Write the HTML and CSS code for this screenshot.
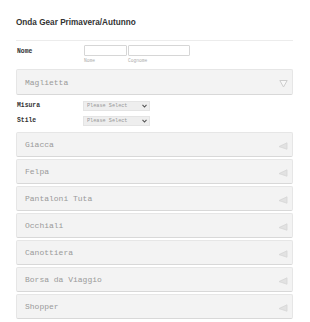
FILE: index.html
```html
<!DOCTYPE html>
<html lang="it">
  <head>
    <meta charset="UTF-8" />
    <meta name="viewport" content="width=device-width, initial-scale=1.0" />
    <title>Onda Gear</title>
    <link rel="stylesheet" href="styles.css">
  </head>
  <body>
    <main class="modulo">
      <h1 class="titolo">Onda Gear Primavera/Autunno</h1>

      <div class="riga riga-nome">
        <label class="etichetta">Nome</label>
        <div class="campo">
          <input type="text" class="inp inp-nome" />
          <span class="sotto">Nome</span>
        </div>
        <div class="campo">
          <input type="text" class="inp inp-cognome" />
          <span class="sotto">Cognome</span>
        </div>
      </div>

      <section class="pannello aperto">
        <span>Maglietta</span>
        <svg class="freccia" width="9" height="9" viewBox="0 0 9 9">
          <path d="M0.8 1.5 L8.2 1.5 L4.5 8 Z" fill="#f8f8f8" stroke="#cdcdcd" stroke-width="1" />
        </svg>
      </section>

      <div class="riga riga-sel prima">
        <label class="etichetta">Misura</label>
        <span class="scelta">
          <select class="sel"><option>Please Select</option></select>
          <svg class="chev" width="5" height="4" viewBox="0 0 5 4"><path d="M0.5 0.8 L2.5 3 L4.5 0.8" fill="none" stroke="#555" stroke-width="1.1" /></svg>
        </span>
      </div>
      <div class="riga riga-sel">
        <label class="etichetta">Stile</label>
        <span class="scelta">
          <select class="sel"><option>Please Select</option></select>
          <svg class="chev" width="5" height="4" viewBox="0 0 5 4"><path d="M0.5 0.8 L2.5 3 L4.5 0.8" fill="none" stroke="#555" stroke-width="1.1" /></svg>
        </span>
      </div>

      <div class="lista">
        <section class="pannello"><span>Giacca</span><svg class="freccia" width="10" height="8" viewBox="0 0 10 8"><path d="M9 0.8 L9 7.2 L1 4.6 Z" fill="#e2e2e2" stroke="#d6d6d6" stroke-width="0.8" /></svg></section>
        <section class="pannello"><span>Felpa</span><svg class="freccia" width="10" height="8" viewBox="0 0 10 8"><path d="M9 0.8 L9 7.2 L1 4.6 Z" fill="#e2e2e2" stroke="#d6d6d6" stroke-width="0.8" /></svg></section>
        <section class="pannello"><span>Pantaloni Tuta</span><svg class="freccia" width="10" height="8" viewBox="0 0 10 8"><path d="M9 0.8 L9 7.2 L1 4.6 Z" fill="#e2e2e2" stroke="#d6d6d6" stroke-width="0.8" /></svg></section>
        <section class="pannello"><span>Occhiali</span><svg class="freccia" width="10" height="8" viewBox="0 0 10 8"><path d="M9 0.8 L9 7.2 L1 4.6 Z" fill="#e2e2e2" stroke="#d6d6d6" stroke-width="0.8" /></svg></section>
        <section class="pannello"><span>Canottiera</span><svg class="freccia" width="10" height="8" viewBox="0 0 10 8"><path d="M9 0.8 L9 7.2 L1 4.6 Z" fill="#e2e2e2" stroke="#d6d6d6" stroke-width="0.8" /></svg></section>
        <section class="pannello"><span>Borsa da Viaggio</span><svg class="freccia" width="10" height="8" viewBox="0 0 10 8"><path d="M9 0.8 L9 7.2 L1 4.6 Z" fill="#e2e2e2" stroke="#d6d6d6" stroke-width="0.8" /></svg></section>
        <section class="pannello"><span>Shopper</span><svg class="freccia" width="10" height="8" viewBox="0 0 10 8"><path d="M9 0.8 L9 7.2 L1 4.6 Z" fill="#e2e2e2" stroke="#d6d6d6" stroke-width="0.8" /></svg></section>
      </div>
    </main>
  </body>
</html>
```

FILE: styles.css
```css
body {
  margin: 0;
  background-color: #fff;
}

.modulo {
  width: 277px;
  padding: 18px 0 0 16px;
}

.titolo {
  margin: 0;
  padding-bottom: 13px;
  border-bottom: 1px solid #ececec;
  font-family: "Liberation Sans", Arial, sans-serif;
  font-size: 8.2px;
  font-weight: bold;
  color: #333;
}

.riga {
  display: flex;
  align-items: flex-start;
}

.riga-nome {
  margin-top: 4px;
  gap: 1px;
}

.etichetta {
  width: 66px;
  padding-left: 1px;
  font-family: "Liberation Mono", "Courier New", monospace;
  font-size: 6.4px;
  font-weight: bold;
  color: #333;
}

.riga-nome .etichetta {
  padding-top: 3px;
}

.campo {
  display: flex;
  flex-direction: column;
}

.inp {
  box-sizing: border-box;
  height: 11px;
  margin: 0;
  padding: 0;
  border: 1px solid #d6d6d6;
  border-radius: 1px;
}

.inp-nome {
  width: 43px;
}

.inp-cognome {
  width: 62px;
}

.sotto {
  margin-top: 2px;
  font-family: "Liberation Mono", "Courier New", monospace;
  font-size: 4.6px;
  color: #aaa;
}

.pannello {
  box-sizing: border-box;
  display: flex;
  align-items: center;
  justify-content: space-between;
  height: 25px;
  padding: 0 4px 0 8px;
  background-color: #f3f3f3;
  border: 1px solid #e6e6e6;
  border-bottom-color: #d8d8d8;
  border-radius: 2px;
  font-family: "Liberation Mono", "Courier New", monospace;
  font-size: 8px;
  color: #9a9a9a;
}

.pannello.aperto {
  height: 26px;
  margin-top: 6px;
}

.pannello .freccia {
  margin-top: 3px;
}

.riga-sel {
  align-items: center;
  height: 15px;
}

.riga-sel.prima {
  margin-top: 3px;
}

.scelta {
  position: relative;
  display: block;
  height: 10px;
}

.sel {
  box-sizing: border-box;
  display: block;
  width: 67px;
  height: 10px;
  margin: 0;
  padding: 0 0 0 3px;
  border: 1px solid #e4e4e4;
  border-radius: 0;
  appearance: none;
  -webkit-appearance: none;
  background-color: #eeeeee;
  font-family: "Liberation Mono", "Courier New", monospace;
  font-size: 5.2px;
  color: #999;
}

.chev {
  position: absolute;
  right: 3px;
  top: 3px;
}

.lista {
  display: flex;
  flex-direction: column;
  gap: 2px;
  margin-top: 4px;
}
```
